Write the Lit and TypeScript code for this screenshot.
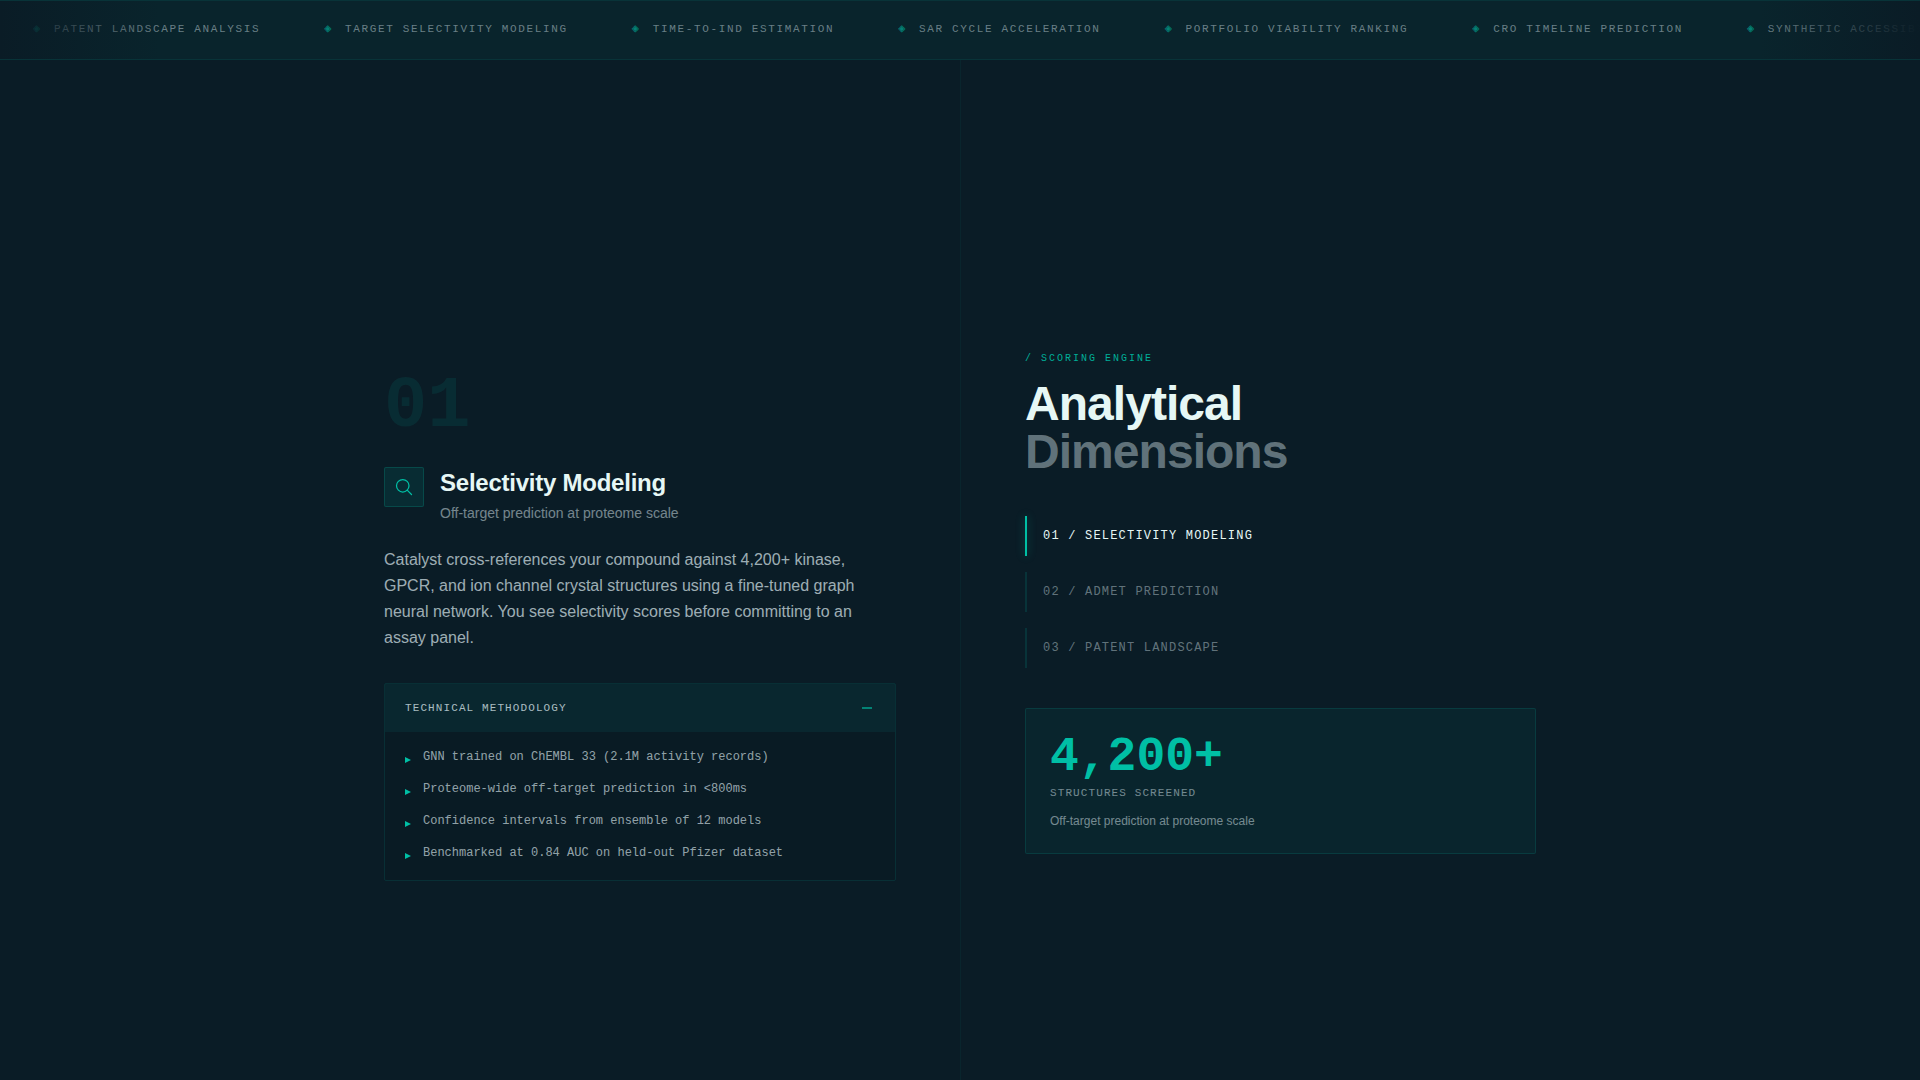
import { LitElement, html, svg, css } from "lit";
import { customElement, state } from "lit/decorators.js";
import { classMap } from "lit/directives/class-map.js";

const TICKER = [
  "PATENT LANDSCAPE ANALYSIS",
  "TARGET SELECTIVITY MODELING",
  "TIME-TO-IND ESTIMATION",
  "SAR CYCLE ACCELERATION",
  "PORTFOLIO VIABILITY RANKING",
  "CRO TIMELINE PREDICTION",
  "SYNTHETIC ACCESSIBILITY",
];

const DIMENSIONS = [
  "01 / SELECTIVITY MODELING",
  "02 / ADMET PREDICTION",
  "03 / PATENT LANDSCAPE",
];

const METHODS = [
  "GNN trained on ChEMBL 33 (2.1M activity records)",
  "Proteome-wide off-target prediction in <800ms",
  "Confidence intervals from ensemble of 12 models",
  "Benchmarked at 0.84 AUC on held-out Pfizer dataset",
];

@customElement("app-root")
export class AppRoot extends LitElement {
  @state() private active = 0;
  @state() private open = true;

  static styles = css`
    :host {
      --bg: #0a1c26;
      --ink: #e6f7f5;
      --teal: #00bfa5;
      display: flex;
      flex-direction: column;
      min-height: 100vh;
      box-sizing: border-box;
      background: var(--bg);
      color: var(--ink);
      font-family: "Liberation Sans", Arial, sans-serif;
    }
    *, *::before, *::after { box-sizing: border-box; }
    h1, h2, p, ul { margin: 0; padding: 0; }
    button { font: inherit; color: inherit; background: none; border: 0; padding: 0; text-align: left; cursor: pointer; }
    .mono { font-family: "Liberation Mono", "Courier New", monospace; }

    .ticker {
      position: relative;
      overflow: hidden;
      height: 60px;
      background: rgba(0, 191, 165, 0.05);
      border-top: 1px solid rgba(0, 191, 165, 0.1);
      border-bottom: 1px solid rgba(0, 191, 165, 0.1);
      display: flex;
      align-items: center;
    }
    .ticker::before, .ticker::after {
      content: "";
      position: absolute;
      z-index: 1;
      top: 0;
      bottom: 0;
      width: 160px;
    }
    .ticker::before { left: 0; background: linear-gradient(to right, var(--bg), transparent); }
    .ticker::after { right: 0; background: linear-gradient(to left, var(--bg), transparent); }
    .track {
      display: flex;
      gap: 64px;
      list-style: none;
      padding: 0 0 2px 33px;
      white-space: nowrap;
      font-size: 11px;
      line-height: 16px;
      letter-spacing: 0.15em;
      color: rgba(224, 240, 245, 0.45);
    }
    .track li { display: flex; align-items: center; gap: 12px; }
    .gem { color: var(--teal); opacity: 0.6; font-size: 12px; }

    .stage {
      flex: 1;
      width: 100%;
      max-width: 1280px;
      margin: 0 auto;
      padding: 0 64px;
      display: grid;
      grid-template-columns: 1fr 1fr;
    }
    .detail, .nav { display: flex; flex-direction: column; justify-content: center; }
    .detail { padding: 112px 64px 0 0; }
    .nav { padding: 64px 0 0 64px; border-left: 1px solid rgba(0, 191, 165, 0.06); }

    .ghost { font-size: 72px; line-height: 72px; font-weight: 700; color: rgba(0, 191, 165, 0.1); margin-bottom: 24px; }
    .head { display: flex; align-items: flex-start; gap: 16px; margin-bottom: 24px; }
    .icon {
      width: 40px;
      height: 40px;
      flex: none;
      display: grid;
      place-items: center;
      border: 1px solid rgba(0, 191, 165, 0.2);
      border-radius: 2px;
      background: rgba(0, 191, 165, 0.1);
      color: var(--teal);
    }
    .title { font-size: 24px; line-height: 32px; font-weight: 700; letter-spacing: -0.01em; }
    .sub { font-size: 14px; line-height: 20px; margin-top: 4px; color: rgba(224, 240, 245, 0.5); }
    .lead { font-size: 16px; line-height: 26px; margin-bottom: 32px; color: rgba(224, 240, 245, 0.7); }

    .panel { border: 1px solid rgba(0, 191, 165, 0.12); border-radius: 2px; }
    .bar {
      width: 100%;
      height: 48px;
      padding: 0 20px;
      display: flex;
      align-items: center;
      justify-content: space-between;
      background: rgba(0, 191, 165, 0.07);
      font-size: 11px;
      letter-spacing: 0.1em;
      color: rgba(224, 240, 245, 0.75);
    }
    .sign { color: var(--teal); opacity: 0.6; display: block; }
    .methods {
      list-style: none;
      padding: 16px 20px 18px;
      display: flex;
      flex-direction: column;
      gap: 14px;
      background: rgba(0, 0, 0, 0.03);
      font-size: 12px;
      line-height: 18px;
      color: rgba(224, 240, 245, 0.65);
    }
    .methods li { display: flex; align-items: flex-end; gap: 12px; }
    .arrow { color: var(--teal); display: block; margin-bottom: 3px; }

    .eyebrow { font-size: 10px; line-height: 18px; letter-spacing: 0.2em; color: var(--teal); opacity: 0.9; margin-bottom: 12px; }
    .heading { font-size: 48px; line-height: 48px; font-weight: 700; letter-spacing: -0.02em; margin-bottom: 40px; }
    .heading span { display: block; color: rgba(224, 240, 245, 0.42); }
    .tabs { display: flex; flex-direction: column; gap: 16px; margin-bottom: 40px; }
    .tab {
      height: 40px;
      display: flex;
      align-items: center;
      gap: 16px;
      font-family: "Liberation Mono", "Courier New", monospace;
      font-size: 12px;
      line-height: 16px;
      letter-spacing: 0.1em;
      color: rgba(224, 240, 245, 0.42);
    }
    .tab::before { content: ""; width: 2px; height: 40px; background: rgba(0, 191, 165, 0.15); }
    .tab.on { color: var(--ink); }
    .tab.on::before { background: var(--teal); box-shadow: 0 0 8px rgba(0, 191, 165, 0.4); }

    .stat { padding: 24px; border: 1px solid rgba(0, 191, 165, 0.15); border-radius: 2px; background: rgba(0, 191, 165, 0.06); }
    .big { font-size: 48px; line-height: 48px; font-weight: 700; color: var(--teal); margin-bottom: 4px; }
    .cap { font-size: 11px; line-height: 16px; letter-spacing: 0.1em; color: rgba(224, 240, 245, 0.5); margin-bottom: 12px; }
    .note { font-size: 12px; line-height: 16px; color: rgba(224, 240, 245, 0.5); }
  `;

  render() {
    return html`
      <div class="ticker">
        <ul class="track mono">
          ${TICKER.map((t) => html`<li><span class="gem" aria-hidden="true">◈</span>${t}</li>`)}
        </ul>
      </div>
      <main class="stage">
        <section class="detail">
          <div class="ghost mono">01</div>
          <div class="head">
            <span class="icon">
              <svg width="20" height="20" viewBox="0 0 24 24" fill="none" stroke="currentColor" stroke-width="1.5" stroke-linecap="round" aria-hidden="true">
                <circle cx="10.5" cy="10.5" r="7.5" />
                <path d="M15.8 15.8 L21 21" />
              </svg>
            </span>
            <div>
              <h2 class="title">Selectivity Modeling</h2>
              <p class="sub">Off-target prediction at proteome scale</p>
            </div>
          </div>
          <p class="lead">
            Catalyst cross-references your compound against 4,200+ kinase, GPCR, and ion channel
            crystal structures using a fine-tuned graph neural network. You see selectivity scores
            before committing to an assay panel.
          </p>
          <div class="panel mono">
            <button class="bar" aria-expanded=${this.open} @click=${() => (this.open = !this.open)}>
              TECHNICAL METHODOLOGY
              <svg class="sign" width="16" height="16" viewBox="0 0 16 16" stroke="currentColor" stroke-width="2" aria-hidden="true">
                <path d="M3 8 H13" />
                ${this.open ? null : svg`<path d="M8 3 V13" />`}
              </svg>
            </button>
            ${this.open
              ? html`<ul class="methods">
                  ${METHODS.map(
                    (m) => html`<li>
                      <svg class="arrow" width="6" height="6" viewBox="0 0 6 6" fill="currentColor" aria-hidden="true"><path d="M0 0 L6 3 L0 6 Z" /></svg>
                      ${m}
                    </li>`
                  )}
                </ul>`
              : null}
          </div>
        </section>
        <section class="nav">
          <p class="eyebrow mono">/ SCORING ENGINE</p>
          <h1 class="heading">Analytical<span>Dimensions</span></h1>
          <nav class="tabs">
            ${DIMENSIONS.map(
              (d, i) => html`<button
                class=${classMap({ tab: true, on: i === this.active })}
                @click=${() => (this.active = i)}
              >${d}</button>`
            )}
          </nav>
          <div class="stat">
            <div class="big mono">4,200+</div>
            <div class="cap mono">STRUCTURES SCREENED</div>
            <p class="note">Off-target prediction at proteome scale</p>
          </div>
        </section>
      </main>
    `;
  }
}
